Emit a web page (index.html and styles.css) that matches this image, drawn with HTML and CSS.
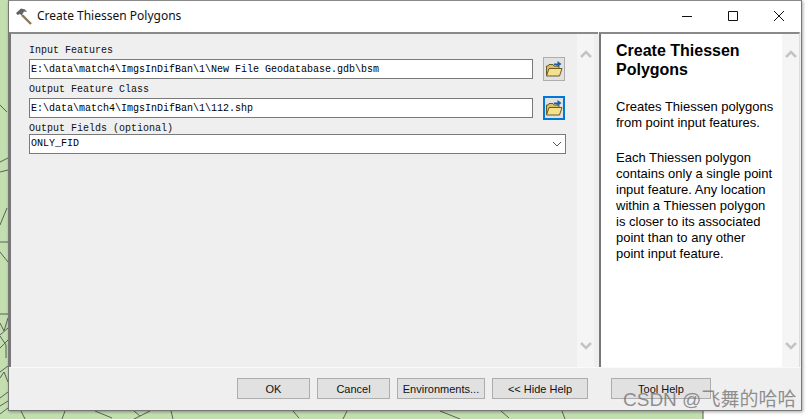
FILE: index.html
```html
<!DOCTYPE html>
<html lang="en">
<head>
    <meta charset="UTF-8">
    <title>Create Thiessen Polygons</title>
    <link rel="stylesheet" href="styles.css">
</head>
<body>
    <!-- map behind the dialog -->
    <svg class="map" width="810" height="419" viewBox="0 0 810 419">
        <path class="map-green" d="M0 0H8V411H703V419H0Z"/>
        <path class="map-line" d="M0 105L7 112M0 162L8 158M0 172L8 170M0 225L7 208M0 242H8M0 252L8 262M0 314H8M0 323L4 331L8 318M0 335L8 328M0 348L8 340M0 336L6 345V358M0 372L8 366M0 378L4 372L8 382M0 398L8 392M0 406L8 401M0 414L8 408M21 411L25 419M65 411L62 419M95 411L112 418M134 411L140 416L150 411M134 419L140 416M171 411L173 419M293 411L299 418M347 411L343 419M440 411L460 419M501 411L509 418M562 411L565 419M703 411V419"/>
    </svg>

    <div class="window">
        <header class="titlebar">
            <svg class="tool-icon" width="18" height="18" viewBox="0 0 18 18">
                <path d="M7 8L16 17" stroke="#8a7a5c" stroke-width="2.4" fill="none"/>
                <path d="M1 6L6 1.500L10 2.500L12 5L9 4.500L6.500 8.500L5 7L2.500 8Z" fill="#5f6468"/>
            </svg>
            <span class="title">Create Thiessen Polygons</span>
            <div class="win-buttons">
                <svg width="12" height="12" viewBox="0 0 12 12"><path d="M1 6.500H11" stroke="#111" fill="none"/></svg>
                <svg width="12" height="12" viewBox="0 0 12 12"><path d="M1.500 1.500H10.500V10.500H1.500Z" stroke="#111" fill="none"/></svg>
                <svg width="12" height="12" viewBox="0 0 12 12"><path d="M1 1L11 11M11 1L1 11" stroke="#111" fill="none"/></svg>
            </div>
        </header>

        <div class="content">
            <section class="form-panel">
                <div class="fields">
                    <label class="field-label">Input Features</label>
                    <div class="field-row">
                        <div class="text-input">E:\data\match4\ImgsInDifBan\1\New File Geodatabase.gdb\bsm</div>
                        <button class="browse">
                            <svg width="18" height="18" viewBox="0 0 18 18">
                                <path d="M1.500 16V6H3L4 4.500H8L9 6H14V8" fill="#d9bf6a" stroke="#6b5a22"/>
                                <path d="M1.500 16L4 8.500H17L14.500 16Z" fill="#f5e08e" stroke="#6b5a22"/>
                                <path d="M9 5V3.500H12.500V1L16.500 4L12.500 7V5.500H11V5Z" fill="#1f5fa8"/>
                            </svg>
                        </button>
                    </div>
                    <label class="field-label">Output Feature Class</label>
                    <div class="field-row">
                        <div class="text-input">E:\data\match4\ImgsInDifBan\1\112.shp</div>
                        <button class="browse focused">
                            <svg width="18" height="18" viewBox="0 0 18 18">
                                <path d="M1.500 16V6H3L4 4.500H8L9 6H14V8" fill="#d9bf6a" stroke="#6b5a22"/>
                                <path d="M1.500 16L4 8.500H17L14.500 16Z" fill="#f5e08e" stroke="#6b5a22"/>
                                <path d="M9 5V3.500H12.500V1L16.500 4L12.500 7V5.500H11V5Z" fill="#1f5fa8"/>
                            </svg>
                        </button>
                    </div>
                    <label class="field-label last-label">Output Fields (optional)</label>
                    <div class="select-input">
                        <span>ONLY_FID</span>
                        <svg width="10" height="6" viewBox="0 0 10 6"><path d="M1 1L5 5L9 1" stroke="#555" fill="none"/></svg>
                    </div>
                </div>
                <div class="scrollbar">
                    <svg width="12" height="8" viewBox="0 0 12 8"><path d="M1 7L6 2L11 7" stroke="#c4c4c4" stroke-width="2.500" fill="none"/></svg>
                    <svg width="12" height="8" viewBox="0 0 12 8"><path d="M1 1L6 6L11 1" stroke="#c4c4c4" stroke-width="2.500" fill="none"/></svg>
                </div>
            </section>

            <aside class="help-panel">
                <div class="help-text">
                    <h2>Create Thiessen Polygons</h2>
                    <p>Creates Thiessen polygons from point input features.</p>
                    <p>Each Thiessen polygon contains only a single point input feature. Any location within a Thiessen polygon is closer to its associated point than to any other point input feature.</p>
                </div>
                <div class="scrollbar">
                    <svg width="12" height="8" viewBox="0 0 12 8"><path d="M1 7L6 2L11 7" stroke="#c4c4c4" stroke-width="2.500" fill="none"/></svg>
                    <svg width="12" height="8" viewBox="0 0 12 8"><path d="M1 1L6 6L11 1" stroke="#c4c4c4" stroke-width="2.500" fill="none"/></svg>
                </div>
            </aside>
        </div>

        <footer class="button-bar">
            <button class="btn btn-ok">OK</button>
            <button class="btn btn-ok">Cancel</button>
            <button class="btn btn-env">Environments...</button>
            <button class="btn btn-hide">&lt;&lt; Hide Help</button>
            <button class="btn btn-tool">Tool Help</button>
        </footer>
    </div>

    <div class="watermark">CSDN @飞舞的哈哈</div>
</body>
</html>
```

FILE: styles.css
```css
html, body {
    margin: 0;
    padding: 0;
}

body {
    width: 810px;
    height: 419px;
    position: relative;
    overflow: hidden;
    background: #fff;
    font-family: "Liberation Sans", Arial, sans-serif;
    color: #000;
}

.map {
    position: absolute;
    left: 0;
    top: 0;
}

.map-green {
    fill: #c3dfb0;
}

.map-line {
    fill: none;
    stroke: #5c5f5a;
    stroke-width: 1;
}

.window {
    position: absolute;
    left: 8px;
    top: 0;
    width: 794px;
    height: 411px;
    box-sizing: border-box;
    display: flex;
    flex-direction: column;
    background: #efefef;
    border: 1px solid #777;
    border-top-color: #888;
    box-shadow: 1px 1px 3px rgba(0, 0, 0, 0.35);
}

.titlebar {
    height: 31px;
    box-sizing: border-box;
    flex: none;
    display: flex;
    align-items: center;
    background: #fff;
    padding: 0 0 2px 6px;
}

.tool-icon {
    margin-right: 4px;
}

.title {
    font-family: "Noto Sans", Arial, sans-serif;
    font-size: 12px;
    color: #111;
}

.win-buttons {
    margin-left: auto;
    display: flex;
    gap: 34px;
    padding-right: 16px;
    align-items: center;
}

.win-buttons svg {
    display: block;
}

.content {
    flex: 1;
    display: flex;
    min-height: 0;
}

.form-panel {
    width: 589px;
    box-sizing: border-box;
    display: flex;
    background: #efefef;
    border-top: 2px solid #8a8a8a;
    border-left: 2px solid #777;
}

.fields {
    flex: 1;
    padding: 8px 0 0 18px;
}

.field-label {
    display: block;
    height: 15px;
    font-family: "Liberation Mono", monospace;
    font-size: 10px;
    line-height: 17px;
    color: #111;
}

.last-label {
    margin-bottom: -1px;
}

.field-row {
    display: flex;
    align-items: center;
    height: 24px;
}

.text-input,
.select-input {
    box-sizing: border-box;
    height: 20px;
    background: #fff;
    border: 1px solid #7a7a7a;
    font-family: "Liberation Mono", monospace;
    font-size: 10px;
    line-height: 20px;
    padding-left: 1px;
    white-space: nowrap;
}

.text-input {
    width: 504px;
}

.select-input {
    width: 537px;
    display: flex;
    align-items: center;
    justify-content: space-between;
    padding-right: 3px;
    line-height: 18px;
}

.browse {
    width: 22px;
    height: 24px;
    box-sizing: border-box;
    margin-left: 10px;
    padding: 0;
    display: flex;
    align-items: center;
    justify-content: center;
    background: #e1e1e1;
    border: 1px solid #adadad;
}

.browse.focused {
    border: 2px solid #0078d7;
}

.scrollbar {
    width: 17px;
    flex: none;
    display: flex;
    flex-direction: column;
    justify-content: space-between;
    align-items: center;
    padding: 16px 0 17px;
    background: #f5f5f5;
}

.form-panel .scrollbar {
    margin-right: 4px;
}

.help-panel {
    flex: 1;
    display: flex;
    background: #fff;
    border-top: 2px solid #8a8a8a;
    border-left: 2px solid #777;
    margin-right: 1px;
    margin-left: 1px;
    border-right: 1px solid #ddd;
}

.help-text {
    flex: 1;
    padding: 7px 8px 0 15px;
    font-size: 13px;
    line-height: 16px;
}

.help-text h2 {
    margin: 0 0 20px;
    font-size: 16px;
    line-height: 19px;
    font-weight: bold;
}

.help-text p {
    margin: 0 0 19px;
}

.button-bar {
    flex: none;
    height: 43px;
    box-sizing: border-box;
    display: flex;
    align-items: flex-start;
    padding: 10px 0 0 228px;
    gap: 7px;
    background: #efefef;
    border-top: 1px solid #fafafa;
}

.btn {
    height: 21px;
    box-sizing: border-box;
    padding: 0;
    background: #e1e1e1;
    border: 1px solid #adadad;
    font-family: "Liberation Sans", Arial, sans-serif;
    font-size: 11px;
    color: #111;
}

.btn-ok {
    width: 73px;
}

.btn-env {
    width: 88px;
}

.btn-hide {
    width: 96px;
}

.btn-tool {
    width: 100px;
    margin-left: 16px;
}

.watermark {
    position: absolute;
    left: 623px;
    top: 389px;
    font-family: "Liberation Sans", "Noto Sans CJK SC", sans-serif;
    font-size: 19px;
    line-height: 22px;
    white-space: nowrap;
    color: rgba(110, 110, 110, 0.75);
}
```
